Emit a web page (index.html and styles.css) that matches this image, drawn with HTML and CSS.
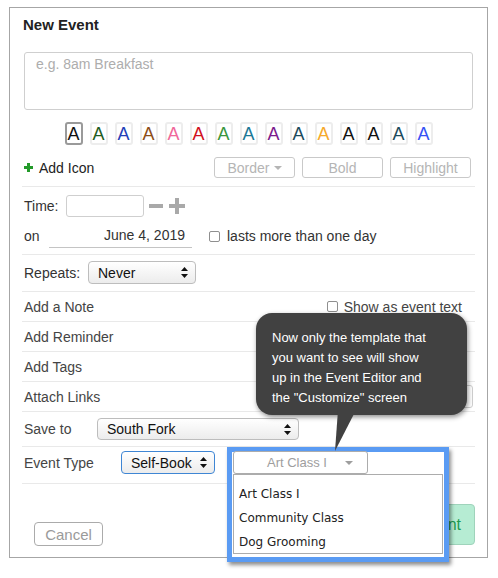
FILE: index.html
```html
<!DOCTYPE html>
<html>
<head>
<meta charset="utf-8">
<link rel="stylesheet" href="styles.css">
</head>
<body>
<div class="card">
  <h1 class="title">New Event</h1>
  <textarea class="name-input" placeholder="e.g. 8am Breakfast"></textarea>
  <div class="swatches">
    <span class="swatch selected c1">A</span>
    <span class="swatch c2">A</span>
    <span class="swatch c3">A</span>
    <span class="swatch c4">A</span>
    <span class="swatch c5">A</span>
    <span class="swatch c6">A</span>
    <span class="swatch c7">A</span>
    <span class="swatch c8">A</span>
    <span class="swatch c9">A</span>
    <span class="swatch c10">A</span>
    <span class="swatch c11">A</span>
    <span class="swatch c12">A</span>
    <span class="swatch c12">A</span>
    <span class="swatch c10">A</span>
    <span class="swatch c15">A</span>
  </div>
  <div class="rows">
    <div class="row row-icon">
      <div class="add-icon">
        <svg class="plus-green" width="9" height="9" viewBox="0 0 9 9"><rect x="3" y="0" width="3" height="9"/><rect x="0" y="3" width="9" height="3"/></svg>
        <span>Add Icon</span>
      </div>
      <div class="fmt-buttons">
        <span class="fmt-btn">Border <span class="caret"></span></span>
        <span class="fmt-btn">Bold</span>
        <span class="fmt-btn">Highlight</span>
      </div>
    </div>
    <div class="row row-time">
      <div class="line">
        <span class="lbl-time">Time:</span>
        <input class="time-input" type="text">
        <svg class="stepper" width="37" height="16" viewBox="0 0 37 16"><rect x="0" y="6" width="14" height="4"/><rect x="20" y="6" width="16" height="4"/><rect x="26" y="0" width="4" height="16"/></svg>
      </div>
      <div class="line">
        <span class="lbl-on">on</span>
        <span class="date-field">June 4, 2019</span>
        <span class="checkbox cb-multi"></span>
        <span>lasts more than one day</span>
      </div>
    </div>
    <div class="row row-repeats">
      <span class="lbl-repeats">Repeats:</span>
      <div class="select sel-repeats"><span>Never</span><svg width="7" height="11" viewBox="0 0 7 11"><polygon points="3.5,0 7,4 0,4"/><polygon points="0,7 7,7 3.5,11"/></svg></div>
    </div>
    <div class="row row-plain">
      <span>Add a Note</span>
      <span class="note-opt"><span class="checkbox"></span><span>Show as event text</span></span>
    </div>
    <div class="row row-plain"><span>Add Reminder</span></div>
    <div class="row row-plain"><span>Add Tags</span></div>
    <div class="row row-plain">
      <span>Attach Links</span>
      <input class="links-input" type="text">
    </div>
    <div class="row row-save">
      <span class="lbl-save">Save to</span>
      <div class="select sel-save"><span>South Fork</span><svg width="7" height="11" viewBox="0 0 7 11"><polygon points="3.5,0 7,4 0,4"/><polygon points="0,7 7,7 3.5,11"/></svg></div>
    </div>
    <div class="row row-type">
      <span class="lbl-type">Event Type</span>
      <div class="select sel-type"><span>Self-Book</span><svg width="7" height="11" viewBox="0 0 7 11"><polygon points="3.5,0 7,4 0,4"/><polygon points="0,7 7,7 3.5,11"/></svg></div>
      <div class="chosen">
        <span class="chosen-text">Art Class I</span>
        <span class="chosen-caret"></span>
        <ul class="chosen-list">
          <li>Art Class I</li>
          <li>Community Class</li>
          <li>Dog Grooming</li>
        </ul>
      </div>
    </div>
  </div>
  <div class="footer">
    <span class="btn-cancel">Cancel</span>
    <span class="btn-save">Save Event</span>
  </div>
</div>

<div class="highlight-frame"></div>

<div class="callout">Now only the template that<br>you want to see will show<br>up in the Event Editor and<br>the "Customize" screen</div>
<svg class="callout-tail" width="30" height="42" viewBox="0 0 30 42"><polygon points="8,0 26,0 5,41"/></svg>
</body>
</html>
```

FILE: styles.css
```css
html, body {
  margin: 0;
  padding: 0;
  background: #fff;
}

body {
  font-family: "Liberation Sans", Arial, sans-serif;
  font-size: 14px;
  color: #333;
}

.card {
  margin: 7px 0 0 9px;
  width: 479px;
  height: 551px;
  box-sizing: border-box;
  border: 1px solid #a6a6a6;
  display: flex;
  flex-direction: column;
}

.title {
  margin: 8px 0 0 13px;
  font-size: 15px;
  line-height: 18px;
  font-weight: bold;
  color: #222;
}

.name-input {
  display: block;
  margin: 18px 14px 0 14px;
  width: 449px;
  height: 58px;
  box-sizing: border-box;
  border: 1px solid #cfcfcf;
  border-radius: 3px;
  padding: 3px 11px;
  font-family: "Liberation Sans", Arial, sans-serif;
  font-size: 14px;
  resize: none;
  outline: none;
}

.name-input::placeholder {
  color: #adadad;
}

.swatches {
  margin-top: 12px;
  display: flex;
  justify-content: center;
  gap: 7px;
}

.swatch {
  width: 18px;
  height: 23px;
  box-sizing: border-box;
  border: 2px solid #ededed;
  border-radius: 3px;
  display: flex;
  align-items: center;
  justify-content: center;
  font-size: 18px;
  line-height: 1;
  font-family: "Liberation Sans", Arial, sans-serif;
}

.swatch.selected {
  border-color: #9a9a9a;
}

.c1 { color: #111; }
.c2 { color: #1f5c22; }
.c3 { color: #2340b8; }
.c4 { color: #8d4d17; }
.c5 { color: #f0679a; }
.c6 { color: #d10f20; }
.c7 { color: #3a963e; }
.c8 { color: #1c7896; }
.c9 { color: #7b1a8d; }
.c10 { color: #1c4a5c; }
.c11 { color: #f6a92c; }
.c12 { color: #111; }
.c15 { color: #3552f5; }

.rows {
  margin: 0 12px;
}

.row {
  display: flex;
  align-items: center;
  border-bottom: 1px solid #e9e9e9;
  padding-left: 2px;
  color: #444;
}

.row-icon {
  padding: 12px 4px 8px 2px;
  justify-content: space-between;
}

.add-icon {
  display: flex;
  align-items: center;
  color: #222;
}

.plus-green {
  fill: #239a2a;
  margin-right: 6px;
}

.fmt-buttons {
  display: flex;
  gap: 7px;
}

.fmt-btn {
  width: 81px;
  height: 21px;
  box-sizing: border-box;
  border: 1px solid #c9c9c9;
  border-radius: 3px;
  color: #b5b5b5;
  font-size: 14px;
  display: flex;
  align-items: center;
  justify-content: center;
}

.caret {
  display: inline-block;
  width: 0;
  height: 0;
  margin-left: 4px;
  border-left: 4px solid transparent;
  border-right: 4px solid transparent;
  border-top: 4px solid #b5b5b5;
}

.row-time {
  flex-direction: column;
  align-items: stretch;
  padding: 8px 0 6px 2px;
  gap: 7px;
}

.line {
  display: flex;
  align-items: center;
  color: #333;
}

.lbl-time {
  width: 42px;
}

.time-input {
  width: 78px;
  height: 22px;
  box-sizing: border-box;
  border: 1px solid #cfcfcf;
  border-radius: 3px;
  margin: 0;
  padding: 0 4px;
  outline: none;
}

.stepper {
  fill: #a9a9a9;
  margin-left: 5px;
}

.line:last-child {
  height: 24px;
}

.lbl-on {
  width: 25px;
}

.date-field {
  width: 143px;
  height: 24px;
  box-sizing: border-box;
  border-bottom: 1px solid #c4c4c4;
  text-align: right;
  padding-right: 7px;
  line-height: 23px;
  color: #333;
}

.checkbox {
  display: inline-block;
  width: 11px;
  height: 11px;
  box-sizing: border-box;
  border: 1px solid #8f8f8f;
  border-radius: 2px;
  background: #fff;
}

.cb-multi {
  margin: 0 7px 0 17px;
}

.row-repeats {
  padding: 6px 0 7px 2px;
  color: #333;
}

.lbl-repeats {
  width: 64px;
}

.select {
  height: 23px;
  box-sizing: border-box;
  border: 1px solid #bdbdbd;
  border-radius: 4px;
  background: linear-gradient(#ffffff, #ececec);
  display: flex;
  align-items: center;
  justify-content: space-between;
  padding: 0 7px 0 9px;
  color: #111;
  font-size: 14px;
}

.select svg {
  fill: #111;
}

.sel-repeats {
  width: 108px;
}

.row-plain {
  height: 29px;
  justify-content: space-between;
}

.note-opt {
  display: flex;
  align-items: center;
  gap: 6px;
  margin-right: 13px;
}

.links-input {
  width: 190px;
  height: 23px;
  box-sizing: border-box;
  border: 1px solid #cfcfcf;
  border-radius: 3px;
  margin: 0 2px 0 0;
  outline: none;
}

.row-save {
  padding: 6px 0 6px 2px;
}

.lbl-save {
  width: 73px;
}

.sel-save {
  width: 202px;
  height: 22px;
}

.row-type {
  padding: 4px 0 9px 2px;
}

.lbl-type {
  width: 97px;
}

.sel-type {
  width: 94px;
  border-color: #3f86d4;
}

.chosen {
  position: relative;
  z-index: 2;
  margin-left: 18px;
  width: 135px;
  height: 23px;
  box-sizing: border-box;
  border: 1px solid #acacac;
  border-radius: 3px;
  background: #fff;
  display: flex;
  align-items: center;
}

.chosen-text {
  padding-left: 33px;
  color: #9e9e9e;
  font-size: 13px;
}

.chosen-caret {
  position: absolute;
  right: 14px;
  top: 9px;
  width: 0;
  height: 0;
  border-left: 4px solid transparent;
  border-right: 4px solid transparent;
  border-top: 4px solid #9e9e9e;
}

.chosen-list {
  position: absolute;
  left: -1px;
  top: 22px;
  width: 210px;
  height: 80px;
  box-sizing: border-box;
  margin: 0;
  padding: 7px 0 0 0;
  list-style: none;
  border: 1px solid #acacac;
  background: #fff;
  font-family: "DejaVu Sans", Verdana, sans-serif;
  font-size: 12px;
  color: #222;
}

.chosen-list li {
  height: 24px;
  line-height: 24px;
  padding-left: 5px;
}

.footer {
  margin-top: auto;
  display: flex;
  align-items: flex-end;
  justify-content: space-between;
  padding: 0 12px 11px 24px;
}

.btn-cancel {
  width: 69px;
  height: 24px;
  box-sizing: border-box;
  border: 1px solid #ababab;
  border-radius: 4px;
  color: #9a9a9a;
  font-size: 15px;
  display: flex;
  align-items: center;
  justify-content: center;
}

.btn-save {
  height: 41px;
  box-sizing: border-box;
  padding: 0 13px;
  margin-bottom: 1px;
  border: 1px solid #9fd3bb;
  border-radius: 4px;
  background: #b6ecd3;
  color: #1e9a50;
  font-size: 16px;
  display: flex;
  align-items: center;
}

.highlight-frame {
  position: absolute;
  left: 227px;
  top: 447px;
  width: 222px;
  height: 115px;
  box-sizing: border-box;
  border: 5px solid #5a9bf3;
  background: #fff;
  box-shadow: 2px 3px 4px rgba(0, 0, 0, 0.45);
  z-index: 1;
}

.callout {
  position: absolute;
  left: 256px;
  top: 313px;
  width: 211px;
  height: 102px;
  box-sizing: border-box;
  padding: 15px 0 0 16px;
  background: #414141;
  border-radius: 16px;
  box-shadow: 1px 2px 5px rgba(0, 0, 0, 0.45);
  color: #fff;
  font-size: 13px;
  line-height: 20px;
  z-index: 3;
}

.callout-tail {
  position: absolute;
  left: 330px;
  top: 410px;
  fill: #414141;
  z-index: 4;
}
```
